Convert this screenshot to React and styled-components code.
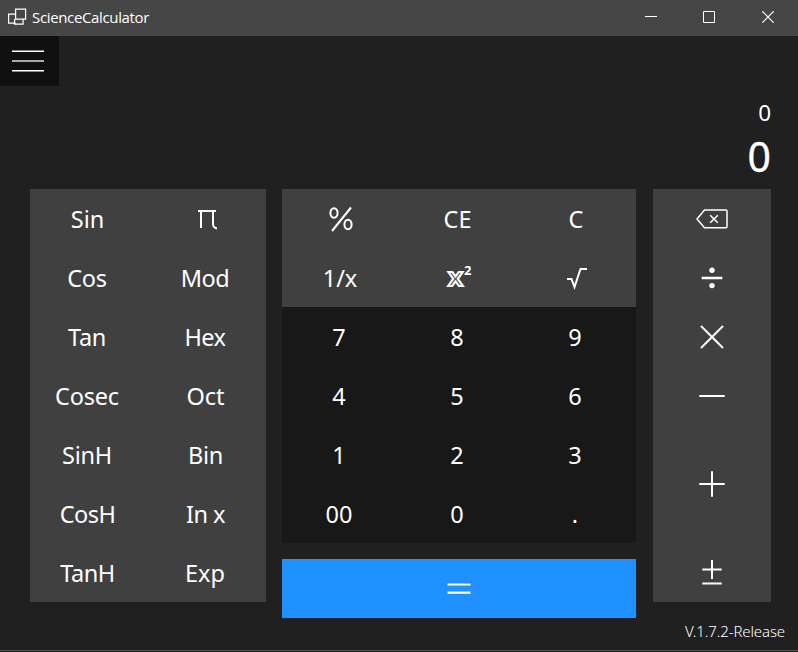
import React from "react";
import styled, { createGlobalStyle } from "styled-components";

const GlobalStyle = createGlobalStyle`
  * { box-sizing: border-box; }
  body { margin: 0; background: #202020; overflow: hidden; }
`;

const Window = styled.main`
  display: flex;
  flex-direction: column;
  width: 798px;
  height: 651px;
  background: #202020;
  border-bottom: 1px solid #505050;
  color: #fff;
  font-family: "Noto Sans", sans-serif;
`;

const TitleBar = styled.header`
  display: flex;
  align-items: center;
  height: 36px;
  flex: none;
  padding-left: 8px;
  background: #464646;
`;

const Title = styled.h1`
  flex: 1;
  margin: -2px 0 0 5px;
  font: 400 15px/36px "Open Sans", sans-serif;
  letter-spacing: -0.35px;
`;

const WindowControl = styled.button`
  display: grid;
  place-items: center;
  width: 58.5px;
  height: 34px;
  margin-top: -2px;
  padding: 0;
  border: 0;
  background: none;
  color: inherit;
  &:last-child { margin-right: 1px; }
`;

const MenuButton = styled.button`
  display: grid;
  place-items: center;
  width: 59px;
  height: 50px;
  flex: none;
  padding: 0 3px 0 0;
  border: 0;
  background: #101010;
  color: #fff;
`;

const Display = styled.section`
  display: flex;
  flex-direction: column;
  align-items: flex-end;
  height: 103px;
  flex: none;
  padding: 11px 27px 0 0;
`;

const History = styled.output`
  font-size: 22.5px;
  line-height: 31px;
`;

const Result = styled.output`
  font-size: 41px;
  line-height: 56px;
  -webkit-text-stroke: 0.3px #fff;
`;

const Keypad = styled.section`
  display: flex;
  align-items: flex-start;
  gap: 16px;
  height: 429px;
  flex: none;
  padding-left: 30px;
`;

const Center = styled.div`
  display: flex;
  flex-direction: column;
  margin-right: 1px;
`;

const Panel = styled.div`
  display: grid;
  grid-template-columns: repeat(${(p) => p.$columns}, 118px);
  grid-auto-rows: 59px;
  background: ${(p) => (p.$dark ? "#181818" : "#404040")};
`;

const Key = styled.button`
  display: flex;
  align-items: center;
  justify-content: center;
  grid-row: span ${(p) => p.$rows || 1};
  padding: 0;
  border: 0;
  background: none;
  color: inherit;
  font: inherit;
`;

const Label = styled.span`
  margin: 1px ${(p) => 4 - (p.$shift || 0) * 2}px 0 0;
  font-size: 23.5px;
  line-height: 32px;
  letter-spacing: ${(p) => p.$tracking || 0}px;
  white-space: pre;
`;

const EqualsKey = styled(Key)`
  width: 354px;
  height: 59px;
  margin-top: 16px;
  background: #1e90ff;
`;

const Version = styled.footer`
  align-self: flex-end;
  padding-right: 13px;
  font-size: 15px;
  font-weight: 300;
  line-height: 27px;
  letter-spacing: -0.12px;
`;

const Glyph = styled.svg`
  display: block;
  flex: none;
  fill: none;
  stroke: currentColor;
  stroke-width: ${(p) => p.$weight || 2};
`;

const Superscript = styled.text`
  font: 700 13px "Noto Sans", sans-serif;
  fill: #fff;
  stroke: none;
`;

const OutlinedLetter = styled.text`
  font: 700 20px "DejaVu Sans", sans-serif;
  fill: #404040;
  stroke: #fff;
  stroke-width: 2px;
`;

/* Key drawings share a 40 x 41 canvas centred in the key. */
const KeyIcon = ({ weight, children }) => (
  <Glyph width="40" height="41" viewBox="0 0 40 41" $weight={weight}>{children}</Glyph>
);

const icons = {
  pi: <KeyIcon><path d="M11 13h18M14 13v17M26 13v13q0 3.5 4 4.5" /></KeyIcon>,
  percent: (
    <KeyIcon><ellipse cx="13" cy="15" rx="3.6" ry="4.8" /><ellipse cx="27" cy="26.5" rx="3.6" ry="4.8" /><path d="M30 9.5L11 33" /></KeyIcon>
  ),
  square: (
    <KeyIcon>
      <OutlinedLetter x="8.8" y="29" textLength="15.5" lengthAdjust="spacingAndGlyphs">X</OutlinedLetter>
      <Superscript x="25" y="17.5">2</Superscript>
    </KeyIcon>
  ),
  root: <KeyIcon><path d="M10 22h4.5L17.5 30L23.5 12H30" /></KeyIcon>,
  backspace: (
    <KeyIcon weight={1.5}><path d="M12.5 12H34q1 0 1 1v15.5q0 1.2-1 1.2H12.5L5 20.9ZM18.2 17.2l7.6 7.6M25.8 17.2l-7.6 7.6" /></KeyIcon>
  ),
  divide: (
    <KeyIcon weight={2.5}><path d="M9.7 21h20.6" /><circle cx="20" cy="13.3" r="2.7" fill="currentColor" stroke="none" /><circle cx="20" cy="28.6" r="2.7" fill="currentColor" stroke="none" /></KeyIcon>
  ),
  multiply: <KeyIcon><path d="M9 10l22 22M31 10L9 32" /></KeyIcon>,
  minus: <KeyIcon><path d="M7.3 21h25.4" /></KeyIcon>,
  plus: <KeyIcon><path d="M7.3 20h25.4M20 7.3v25.4" /></KeyIcon>,
  sign: <KeyIcon><path d="M10.3 17.5h19.4M20 8v19M10.3 31.5h19.4" /></KeyIcon>,
  equals: <KeyIcon weight={2.2}><path d="M8.5 16.5h23M8.5 24.7h23" /></KeyIcon>,
};

const functionKeys = [
  { text: "Sin", shift: 0.5 }, { icon: "pi" }, { text: "Cos", tracking: -0.3 }, { text: "Mod", tracking: -0.5 },
  { text: "Tan", tracking: -0.3 }, { text: "Hex", tracking: -0.5 }, { text: "Cosec", tracking: -0.2 }, { text: "Oct", shift: 0.5 },
  { text: "SinH", tracking: -0.2 }, { text: "Bin", tracking: -0.3, shift: 0.5 }, { text: "CosH", tracking: -0.5, shift: 0.5 }, { text: "In x", tracking: -0.5, shift: 0.5 },
  { text: "TanH", tracking: -0.5, shift: 0.5 }, { text: "Exp" },
];
const topKeys = [
  { icon: "percent" }, { text: "CE", shift: 0.5 }, { text: "C", shift: 1 },
  { text: "1/x", shift: 1 }, { icon: "square" }, { icon: "root" },
];
const digitKeys = ["7", "8", "9", "4", "5", "6", "1", "2", "3", "00", "0", "."].map((text) => ({ text }));
const operatorKeys = [
  { icon: "backspace" }, { icon: "divide" }, { icon: "multiply" },
  { icon: "minus" }, { icon: "plus", rows: 2 }, { icon: "sign" },
];

const Keys = ({ items, columns, dark }) => (
  <Panel $columns={columns} $dark={dark}>
    {items.map((k) => (
      <Key key={k.text || k.icon} $rows={k.rows}>
        {k.icon ? icons[k.icon] : <Label $tracking={k.tracking} $shift={k.shift}>{k.text}</Label>}
      </Key>
    ))}
  </Panel>
);

export default function App() {
  return (
    <>
      <GlobalStyle />
      <Window>
        <TitleBar>
          <Glyph width="19" height="20" viewBox="0 0 19 20" $weight={1.2}>
            <path d="M7.6 1.1h10v10h-10zM7.6 6.1h-7v9h7M6.6 11.1v5h8.5v-5" />
          </Glyph>
          <Title>ScienceCalculator</Title>
          <WindowControl aria-label="Minimize"><Glyph width="12" height="12" $weight={1}><path d="M0 5.5h12" /></Glyph></WindowControl>
          <WindowControl aria-label="Maximize"><Glyph width="12" height="12" $weight={1}><path d="M.5.5h11v11H.5z" /></Glyph></WindowControl>
          <WindowControl aria-label="Close"><Glyph width="12" height="12" $weight={1.2}><path d="M.3.3l11.4 11.4M11.7.3L.3 11.7" /></Glyph></WindowControl>
        </TitleBar>
        <MenuButton aria-label="Menu">
          <Glyph width="32" height="24" $weight={1.5}><path d="M0 2.2h32M0 21.7h32" /><path d="M0 12h32" stroke="#aaa" strokeWidth="2" /></Glyph>
        </MenuButton>
        <Display>
          <History>0</History>
          <Result>0</Result>
        </Display>
        <Keypad>
          <Keys items={functionKeys} columns={2} />
          <Center>
            <Keys items={topKeys} columns={3} />
            <Keys items={digitKeys} columns={3} dark />
            <EqualsKey aria-label="Equals">{icons.equals}</EqualsKey>
          </Center>
          <Keys items={operatorKeys} columns={1} />
        </Keypad>
        <Version>V.1.7.2-Release</Version>
      </Window>
    </>
  );
}
